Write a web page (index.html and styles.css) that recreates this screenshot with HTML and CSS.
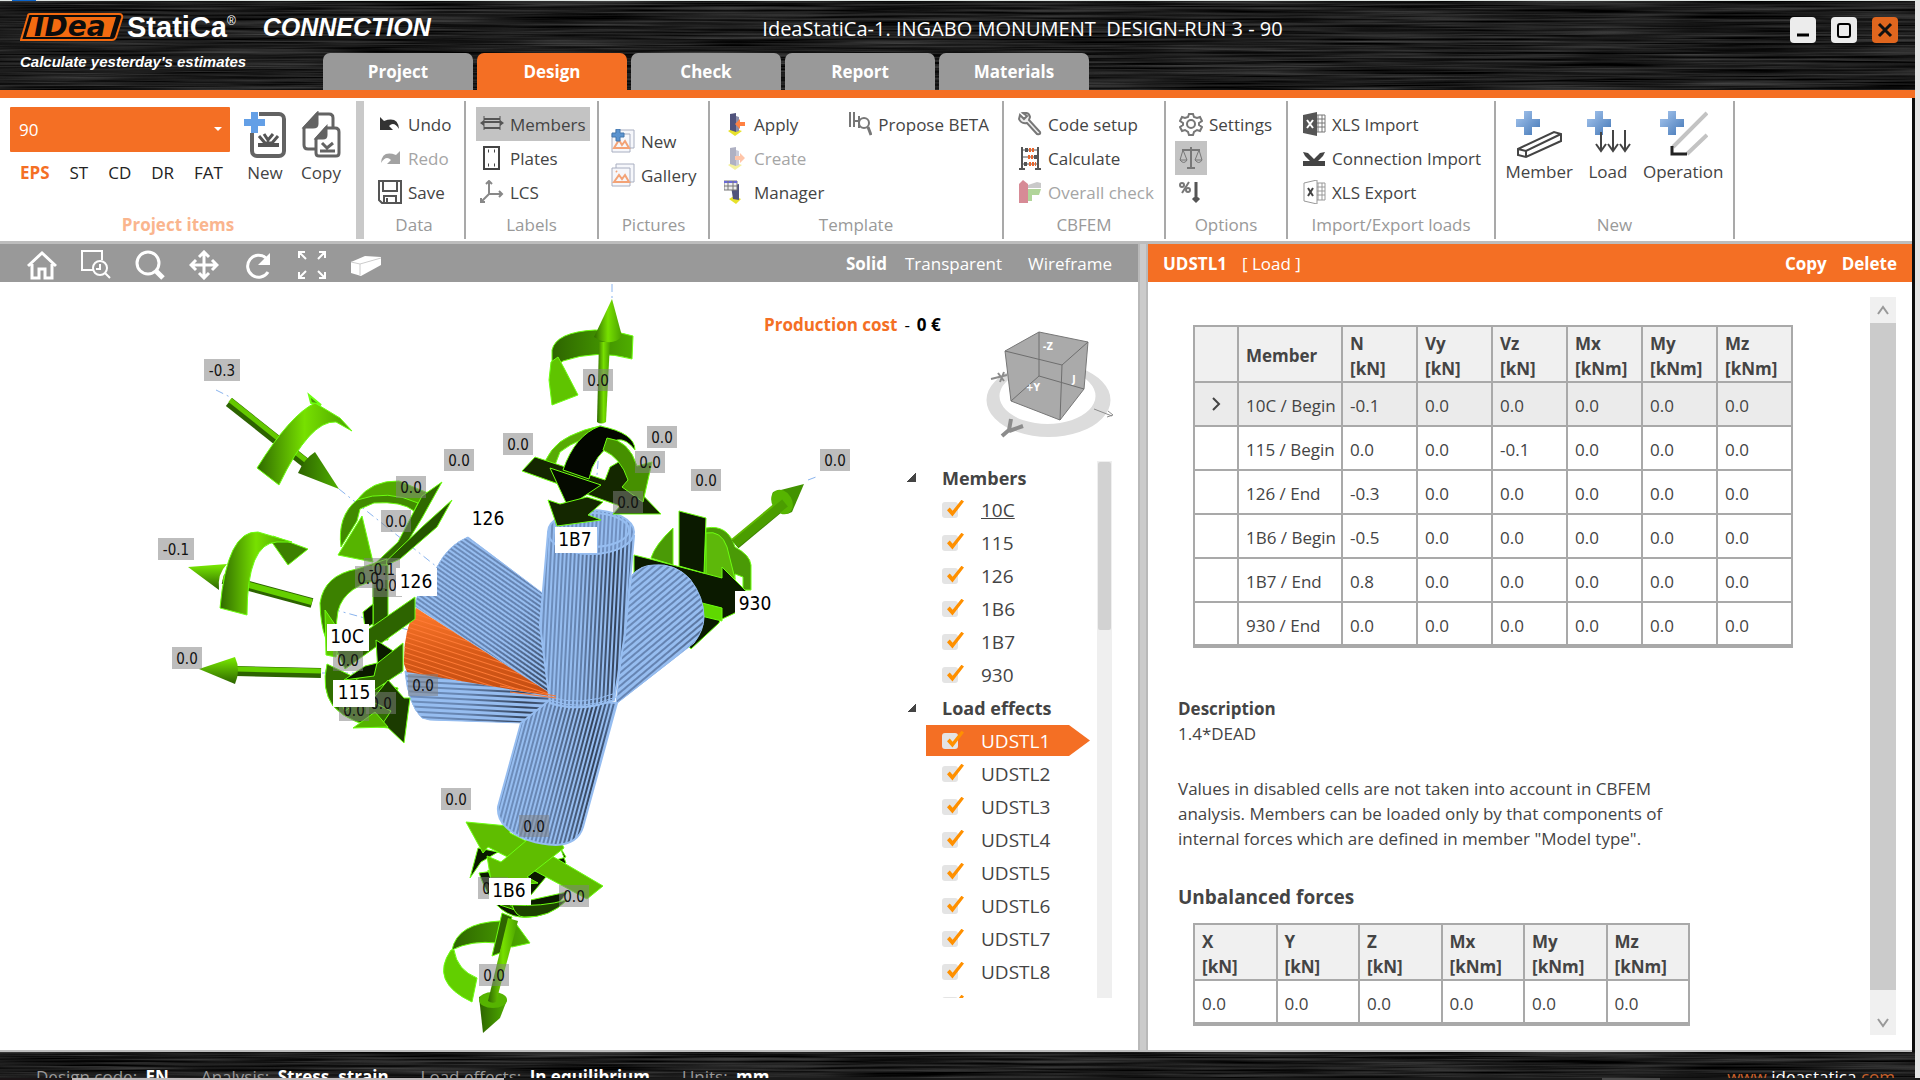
FILE: index.html
```html
<!DOCTYPE html>
<html lang="en">
<head>
<meta charset="UTF-8">
<meta name="viewport" content="width=device-width, initial-scale=1.0">
<title>IdeaStatiCa-1. INGABO MONUMENT DESIGN-RUN 3 - 90</title>
<link rel="stylesheet" href="styles.css">
</head>
<body>

<div class="window">
    <header class="titlebar">
        <svg class="metal" width="100%" height="100%" preserveAspectRatio="none">
            <filter id="brushed" x="0" y="0" width="100%" height="100%" color-interpolation-filters="sRGB">
                <feTurbulence type="fractalNoise" baseFrequency="0.006 0.45" numOctaves="3" seed="4"/>
                <feColorMatrix values="0.4 0 0 0 -0.09  0.4 0 0 0 -0.09  0.4 0 0 0 -0.09  0 0 0 0 1"/>
            </filter>
            <rect width="100%" height="100%" filter="url(#brushed)"/>
        </svg>
        <div class="brand">
            <div class="brand-row">
                <span class="idea">
                    <svg viewBox="0 0 104 28" width="104" height="28"><path d="M10 1h89q4 0 3 4l-6 19q-1 3-4 3H1L8 3q0-2 2-2z" fill="#0c0c0c" stroke="#f26a10" stroke-width="2"/><path d="M12 4h84l-6 20H6z" fill="#f26a10"/></svg>
                    <b>IDea</b>
                </span>
                <span class="statica">StatiCa<sup>®</sup></span>
                <span class="connection">CONNECTION</span>
            </div>
            <div class="slogan">Calculate yesterday's estimates</div>
        </div>
        <h1 class="title">IdeaStatiCa-1. INGABO MONUMENT&nbsp; DESIGN-RUN 3 - 90</h1>
        <div class="window-buttons">
            <button aria-label="Minimize"><svg width="26" height="26"><path d="M7 18h12" stroke="#000" stroke-width="3"/></svg></button>
            <button aria-label="Maximize"><svg width="26" height="26"><rect x="7" y="7" width="12" height="13" rx="2" fill="none" stroke="#000" stroke-width="2"/></svg></button>
            <button class="close" aria-label="Close"><svg width="26" height="26"><path d="M7 7l12 12M19 7L7 19" stroke="#111" stroke-width="3"/></svg></button>
        </div>
        <nav class="tabs">
            <button>Project</button>
            <button class="active">Design</button>
            <button>Check</button>
            <button>Report</button>
            <button>Materials</button>
        </nav>
    </header>

    <div class="ribbon">
        <section class="group g-project">
            <div class="tools">
                <div class="item-picker">
                    <div class="combo"><select aria-label="Project item"><option>90</option></select></div>
                    <div class="modes">
                        <button class="on">EPS</button><button>ST</button><button>CD</button><button>DR</button><button>FAT</button>
                    </div>
                </div>
                <button class="big">
                    <svg width="44" height="50"><rect x="9" y="3" width="32" height="42" rx="5" fill="#fff" stroke="#636363" stroke-width="4"/><path d="M0 7h7V0h9v7h7v8h-7v7H7v-7H0z" fill="#fff"/><path d="M1 8h7V1h7v7h7v7h-7v7H8v-7H1z" fill="#639fe6"/><path d="M15 34h21" stroke="#555" stroke-width="4"/><path d="M16 25l6 7h7l6-7M21 23l4 6 5-6" stroke="#555" stroke-width="3" fill="none"/></svg>
                    New
                </button>
                <button class="big">
                    <svg width="44" height="50" fill="#fff" stroke="#636363" stroke-width="3"><path d="M18 3h12q4 0 4 4v28q0 3-3 3H9q-4 0-4-4V17z"/><path d="M18 3v10q0 3-4 3H6z" fill="#636363"/><path d="M27 17h9q4 0 4 4v21q0 3-3 3H20q-3 0-3-3V28z"/><path d="M27 17v7q0 3-3 3h-6z" fill="#636363"/><path d="M21 40h15M23 32l5 5 6-5" fill="none"/></svg>
                    Copy
                </button>
            </div>
            <h2>Project items</h2>
        </section>

        <section class="group g-data">
            <div class="tools col">
                <button><svg width="24" height="24"><path d="M2 5v13h13l-4-4q5-5 10 3-1-13-15-8z" fill="#333"/></svg>Undo</button>
                <button disabled><svg width="24" height="24"><path d="M22 5v13H9l4-4Q8 9 3 17 4 4 18 9z" fill="#333"/></svg>Redo</button>
                <button><svg width="24" height="24" fill="none" stroke="#555" stroke-width="2"><path d="M1 1h22v22H4l-3-3zM5 1v10h14V1M6 23v-7h12v7M9 18v4"/></svg>Save</button>
            </div>
            <h2>Data</h2>
        </section>

        <section class="group g-labels">
            <div class="tools col">
                <button class="pressed"><svg width="24" height="24" fill="none" stroke="#555" stroke-width="2"><path d="M4 4v14M20 4v14" stroke-width="1"/><path d="M4 7h16M4 16h16M3 10h18" /><path d="M0 11l4-3v6zM24 11l-4-3v6z" fill="#555" stroke="none"/></svg>Members</button>
                <button><svg width="24" height="24" fill="none" stroke="#444" stroke-width="2"><rect x="4" y="1" width="15" height="22"/><path d="M8 5h1M14 5h1M8 19h1M14 19h1" stroke-width="3"/></svg>Plates</button>
                <button><svg width="24" height="24" fill="none" stroke="#888" stroke-width="2"><path d="M9 1v13h13M9 14l-8 8M6 4l3-3 3 3M19 11l3 3-3 3M1 18v4h4"/></svg>LCS</button>
            </div>
            <h2>Labels</h2>
        </section>

        <section class="group g-pictures">
            <div class="tools col">
                <button><svg width="24" height="24" fill="#f6f7fb" stroke="#a8aec0"><path d="M5 1h18v18H5z"/><path d="M1 5h18v18H1z"/><path d="M3 19l5-8 3 5 3-4 4 7z" fill="none" stroke="#f3a377" stroke-width="2"/><path d="M1 4h4V0h4v4h4v4H9v4H5V8H1z" fill="#5b93cf" stroke="#4576ac"/></svg>New</button>
                <button><svg width="24" height="24" fill="#f6f7fb" stroke="#a8aec0"><path d="M5 1h18v18H5z"/><path d="M1 5h18v18H1z"/><path d="M3 19l5-7 3 4 3-4 4 7zM5 8l1 1" fill="none" stroke="#f3a377" stroke-width="2"/></svg>Gallery</button>
            </div>
            <h2>Pictures</h2>
        </section>

        <section class="group g-template">
            <div class="tools">
                <div class="col">
                    <button><svg width="24" height="24"><path d="M4 19l5-3 9 3-7 5z" fill="#e7e12b"/><path d="M6 2l6-1v19l-6-2z" fill="#50537c"/><path d="M12 4l3 1v14l-3 1z" fill="#8b8ea9"/><path d="M11 12l5-5v3h5v4h-5v3z" fill="#ff8142"/></svg>Apply</button>
                    <button disabled><svg width="24" height="24"><path d="M4 19l5-3 9 3-7 5z" fill="#e7e12b"/><path d="M6 2l6-1v19l-6-2z" fill="#50537c"/><path d="M12 4l3 1v14l-3 1z" fill="#8b8ea9"/><path d="M21 12l-5-5v3h-5v4h5v3z" fill="#ff8142"/></svg>Create</button>
                    <button><svg width="24" height="24"><path d="M5 19l5-3 7 3-5 5z" fill="#e7e12b"/><path d="M7 6l8-2v16l-6-1z" fill="#50537c"/><path d="M0 1h13v9H0z" fill="#eee" stroke="#777"/><path d="M0 2h13" stroke="#6a6ad8" stroke-width="2"/><path d="M4 1v9M9 1v9M0 6h13" stroke="#777"/></svg>Manager</button>
                </div>
                <div class="col">
                    <button><svg width="24" height="24" fill="none" stroke="#777" stroke-width="2"><path d="M2 0v15M6 0v15M11 4v12M7 9h4"/><circle cx="16" cy="11" r="5"/><path d="M20 15l3 8" stroke-width="3"/></svg>Propose BETA</button>
                </div>
            </div>
            <h2>Template</h2>
        </section>

        <section class="group g-cbfem">
            <div class="tools col">
                <button><svg width="24" height="24"><path d="M2 3l4 4 3-3-4-3q6-1 7 4l-1 3 11 12q1 3-3 2L9 11q-6 1-8-4z" fill="#eee" stroke="#777" stroke-width="2"/></svg>Code setup</button>
                <button><svg width="24" height="24" fill="none" stroke="#555" stroke-width="2"><path d="M4 1v22M20 1v22M1 23h6M17 23h6"/><path d="M4 4h16M4 11h16M4 18h16" stroke-width="1"/><path d="M7 4h3M16 11h3M6 18h3" stroke-width="4"/><path d="M11 4h5M10 11h5M11 18h7" stroke="#e9652c" stroke-width="4" stroke-dasharray="2 1"/></svg>Calculate</button>
                <button disabled><svg width="24" height="24"><path d="M1 4l4-4 5 4v19H1z" fill="#a80018"/><path d="M10 5l9-3 4 1v5H10z" fill="#888"/><path d="M10 9h13l-2 6h-7v6h-4z" fill="#55a320"/></svg>Overall check</button>
            </div>
            <h2>CBFEM</h2>
        </section>

        <section class="group g-options">
            <div class="tools col">
                <button><svg width="24" height="24" fill="none" stroke="#777" stroke-width="2"><path d="M10 2h4l1 3 3 1 3-1 2 4-3 2v2l3 2-2 4-3-1-3 2-1 3h-4l-1-3-3-2-3 1-2-4 3-2v-2L1 9l2-4 3 1 3-1z"/><circle cx="12" cy="12" r="4"/></svg>Settings</button>
                <button class="pressed" aria-label="Equilibrium"><svg width="24" height="24" fill="none" stroke="#777" stroke-width="2"><path d="M12 1v21M8 22h8M3 4h18" /><path d="M4 4L1 14M4 4l4 10M20 4l-4 10M20 4l3 10M1 14h7q-3 5-7 0zM16 14h7q-3 5-7 0z" stroke-width="1"/></svg></button>
                <button aria-label="Percentage of load"><svg width="24" height="24" fill="none" stroke="#777" stroke-width="2"><circle cx="3" cy="5" r="2"/><circle cx="9" cy="10" r="2"/><path d="M10 2L3 13"/><path d="M17 2v19M14 18l3 3 3-3" stroke="#555" stroke-width="3"/></svg></button>
            </div>
            <h2>Options</h2>
        </section>

        <section class="group g-import">
            <div class="tools col">
                <button><svg width="24" height="24"><path d="M12 3h11v17H12z" fill="#fff" stroke="#777"/><path d="M16 3v17M20 3v17M12 7h11M12 11h11M12 15h11" stroke="#777"/><path d="M1 3l14-3v24L1 21z" fill="#555"/><path d="M5 8l6 8M11 8l-6 8" stroke="#fff" stroke-width="2"/></svg>XLS Import</button>
                <button><svg width="24" height="24"><path d="M1 15h22v5H1zM1 6l5 1 6 6 6-6 5-1-2 4-5 5H8l-5-5z" fill="#444"/></svg>Connection Import</button>
                <button><svg width="24" height="24"><path d="M12 3h11v17H12z" fill="#fff" stroke="#999"/><path d="M16 3v17M20 3v17M12 7h11M12 11h11M12 15h11" stroke="#999"/><path d="M2 3l13-3v24L2 21z" fill="#fff" stroke="#999"/><path d="M6 8l5 8M11 8l-5 8" stroke="#444" stroke-width="2"/></svg>XLS Export</button>
            </div>
            <h2>Import/Export loads</h2>
        </section>

        <section class="group g-new">
            <div class="tools">
                <button class="big">
                    <svg width="50" height="50"><defs><linearGradient id="plus" x2="1" y2="1"><stop offset="0" stop-color="#a9c8f0"/><stop offset="1" stop-color="#4377b6"/></linearGradient></defs><path d="M2 9h8V1h8v8h8v8h-8v8h-8v-8H2z" fill="url(#plus)"/><path d="M4 39l36-17 7 2v7L12 47l-8-2zM4 39l8 2 35-17M12 41v6" fill="#fff" stroke="#444" stroke-width="2"/></svg>
                    Member
                </button>
                <button class="big">
                    <svg width="50" height="50"><path d="M4 9h8V1h8v8h8v8h-8v8h-8v-8H4z" fill="url(#plus)"/><path d="M18 22v18M30 20v20M42 20v20M13 34l5 7 5-7M25 34l5 7 5-7M37 34l5 7 5-7" fill="none" stroke="#444" stroke-width="2"/></svg>
                    Load
                </button>
                <button class="big">
                    <svg width="50" height="50"><path d="M49 3L15 37M49 25L29 44" fill="none" stroke="#c3c3c3" stroke-width="4"/><path d="M2 9h8V1h8v8h8v8h-8v8h-8v-8H2z" fill="url(#plus)"/><path d="M14 36v8h15" fill="none" stroke="#222" stroke-width="3"/></svg>
                    Operation
                </button>
            </div>
            <h2>New</h2>
        </section>
    </div>

    <main class="workspace">
        <section class="pane">
            <div class="viewbar">
                <button aria-label="Home"><svg width="30" height="30" fill="none" stroke="#fff" stroke-width="3"><path d="M1 16L15 3l14 13M5 14v14h7v-9h6v9h7V14"/></svg></button>
                <button aria-label="Zoom window"><svg width="30" height="30" fill="none" stroke="#fff" stroke-width="2"><path d="M12 20H1V1h20v9"/><circle cx="19" cy="18" r="7"/><path d="M24 23l5 5M19 14v5h-4"/></svg></button>
                <button aria-label="Zoom"><svg width="30" height="30" fill="none" stroke="#fff" stroke-width="3"><circle cx="13" cy="13" r="11"/><path d="M21 21l7 7" stroke-width="5"/></svg></button>
                <button aria-label="Pan"><svg width="30" height="30" fill="none" stroke="#fff" stroke-width="3"><path d="M15 3v24M3 15h24M10 7l5-5 5 5M10 23l5 5 5-5M7 10l-5 5 5 5M23 10l5 5-5 5"/></svg></button>
                <button aria-label="Rotate"><svg width="30" height="30" fill="none" stroke="#fff" stroke-width="3"><path d="M25 22A11 11 0 1 1 23 8"/><path d="M27 3v12H15z" fill="#fff" stroke="none"/></svg></button>
                <button aria-label="Fit"><svg width="30" height="30" fill="none" stroke="#fff" stroke-width="2"><path d="M2 8V2h6M2 2l7 7M22 2h6v6M28 2l-7 7M2 22v6h6M2 28l7-7M22 28h6v-6M28 28l-7-7"/></svg></button>
                <button aria-label="Perspective"><svg width="30" height="30"><path d="M0 12L14 6l16 1v8L10 26 0 23z" fill="#fff"/><path d="M0 12l9 2 21-6M9 14v11" stroke="#ccc" fill="none"/></svg></button>
                <div class="render-modes">
                    <button class="on">Solid</button><button>Transparent</button><button>Wireframe</button>
                </div>
            </div>
            <div class="viewport">
                <svg class="scene" viewBox="0 282 1138 768" preserveAspectRatio="xMinYMin meet">
                    <defs>
                        <pattern id="sv" width="4" height="9" patternUnits="userSpaceOnUse" patternTransform="rotate(3)"><rect width="2" height="9" fill="#96bdf0"/></pattern>
                        <pattern id="sl" width="4" height="9" patternUnits="userSpaceOnUse" patternTransform="rotate(15)"><rect width="2" height="9" fill="#96bdf0"/></pattern>
                        <pattern id="s126" width="9" height="4" patternUnits="userSpaceOnUse" patternTransform="rotate(35)"><rect width="9" height="2" fill="#96bdf0"/></pattern>
                        <pattern id="s115" width="9" height="5" patternUnits="userSpaceOnUse" patternTransform="rotate(3)"><rect width="9" height="3" fill="#96bdf0"/></pattern>
                        <pattern id="s930" width="9" height="5" patternUnits="userSpaceOnUse" patternTransform="rotate(-40)"><rect width="9" height="3" fill="#96bdf0"/></pattern>
                        <pattern id="s10c" width="9" height="5" patternUnits="userSpaceOnUse" patternTransform="rotate(18)"><rect width="9" height="1" fill="#ff7a35"/></pattern>
                        <linearGradient id="tube"><stop offset="0" stop-color="#6f90bf"/><stop offset=".4" stop-color="#6684b0"/><stop offset=".8" stop-color="#33425a"/><stop offset="1" stop-color="#5573a0"/></linearGradient>
                        <linearGradient id="tube2" x2="1" y2="1"><stop offset="0" stop-color="#6f90bf"/><stop offset=".6" stop-color="#6482b0"/><stop offset="1" stop-color="#33425a"/></linearGradient>
                        <linearGradient id="org" x2="0" y2="1"><stop offset="0" stop-color="#ff7a2c"/><stop offset=".5" stop-color="#d85a18"/><stop offset="1" stop-color="#c24d12"/></linearGradient>
                        <linearGradient id="gr"><stop offset="0" stop-color="#2f6a00"/><stop offset=".5" stop-color="#77e000"/><stop offset="1" stop-color="#4aa000"/></linearGradient>
                        <linearGradient id="grv" x2="0" y2="1"><stop offset="0" stop-color="#7aec00"/><stop offset="1" stop-color="#2c6300"/></linearGradient>
                        <linearGradient id="gd"><stop offset="0" stop-color="#2d6400"/><stop offset="1" stop-color="#4fae00"/></linearGradient>
                    </defs>

                    <!-- member axes -->
                    <path d="M612 284v14M601 425l-4 50M216 390l14 7M339 489l98 78M332 609l80 22M322 673h84M808 480l8-3" fill="none" stroke="#8ab4ee" stroke-dasharray="8 4 2 4"/>

                    <!-- forces on 930 -->
                    <g stroke="#6dff10" stroke-width="1">
                        <path d="M651 558Q655 545 673 528v37zM706 528Q728 524 735 547 750 555 751 565V590h-8V577l-8-3v16l-31-16z" fill="#4a9a06"/>
                        <path d="M706 533q15-3 21 14l8 32h-29z" fill="#5db80a"/>
                        <path d="M634 555l16 4 72 19v-11l25 25-12 21-15 7-1 3-28 26-57-70z" fill="#0b1a00"/>
                        <path d="M690 600l32 8v13l-25-6z" fill="#5fd800"/>
                        <path d="M679 511l27 7-2 55-25-7z" fill="#0b1a00"/>
                    </g>
                    <path d="M735 544l48-40" stroke="#3c8200" stroke-width="11"/>
                    <path d="M733 541l48-40" stroke="#61bb00" stroke-width="5"/>
                    <path d="M773 492l31-8-12 28q-10 6-17-5-5-9-2-15z" fill="#429300"/>
                    <ellipse cx="782" cy="502" rx="10" ry="13" transform="rotate(-30 782 502)" fill="#56b400"/>
                    <path d="M735 544l50-41" stroke="#4b9d00" stroke-width="9"/>

                    <!-- members -->
                    <path d="M632 575Q641 565 654 565 675 563 690 579 704 597 704 617 704 630 694 643L616 704l8-70z" fill="url(#tube2)"/>
                    <path d="M632 575Q641 565 654 565 675 563 690 579 704 597 704 617 704 630 694 643L616 704l8-70z" fill="url(#s930)" stroke="#96bdf0"/>
                    <path d="M405 671Q408 705 422 718l8 2 93 3 27-16 6-10z" fill="url(#tube)"/>
                    <path d="M405 671Q408 705 422 718l8 2 93 3 27-16 6-10z" fill="url(#s115)" stroke="#96bdf0"/>
                    <path d="M468 537Q448 545 437 567 418 590 414 606L556 697 545 595z" fill="url(#tube2)"/>
                    <path d="M468 537Q448 545 437 567 418 590 414 606L556 697 545 595z" fill="url(#s126)" stroke="#96bdf0"/>
                    <path d="M416 608Q403 632 404 664l3 8 149 25z" fill="url(#org)"/>
                    <path d="M416 608Q403 632 404 664l3 8 149 25z" fill="url(#s10c)"/>

                    <!-- forces on 1B6, behind the tube -->
                    <g stroke="#6dff10">
                        <path d="M478 848l20 4-17 10-11 16zM479 873l60-8 27-8-6-10 6 16-20 14-20 24 41-9Q550 920 520 917q-27-3-41-44z" fill="#0b1a00"/>
                        <path d="M488 870l12 35 18 6-18-14z" fill="#2e6500"/>
                        <path d="M512 905q30 2 55-5-17 18-43 17-8 0-12-12z" fill="#1d4200"/>
                        <path d="M466 822l42 4 2 7 20 10 73 43-16 13-50-27-49-25-5 6z" fill="#5fbd00"/>
                        <path d="M527 840h33l4 8-37 29 11 6-46 4-5-31 14 6z" fill="#5fbd00"/>
                    </g>
                    <path d="M521 723L498 807q-1 12 8 20 18 17 50 18 22-1 27-18l34-124-66-4z" fill="url(#tube)"/>
                    <path d="M521 723L498 807q-1 12 8 20 18 17 50 18 22-1 27-18l34-124-66-4z" fill="url(#sl)" stroke="#96bdf0" stroke-width="2"/>

                    <path d="M548 533L540 625l10 78q30 10 64-3L625 634l9-98z" fill="url(#tube)"/>
                    <path d="M548 533L540 625l10 78q30 10 64-3L625 634l9-98z" fill="url(#sv)" stroke="#96bdf0" stroke-width="2"/>
                    <ellipse cx="591" cy="532" rx="43" ry="22" fill="#7090c0"/>
                    <ellipse cx="591" cy="532" rx="43" ry="22" fill="url(#sv)" stroke="#96bdf0" stroke-width="2"/>
                    <ellipse cx="592" cy="530" rx="37" ry="17" fill="none" stroke="#96bdf0" stroke-width="2"/>
                    <path d="M550 700q30 12 66-3M550 697q30 10 66-4" fill="none" stroke="#96bdf0"/>
                    <path d="M500 686l56 10M510 692l46 6" stroke="#ff7a35"/>

                    <!-- forces on 1B7 -->
                    <g stroke="#6dff10">
                        <path d="M541 473Q548 446 570 436q14-7 30-10l10 8q-30 2-50 18l-5 13z" fill="#57aa05"/>
                        <path d="M522 471l13-14 70 23 5-13 12-7 13 27 26 27h-48l7-8z" fill="#142700"/>
                        <path d="M563 470Q575 435 600 426q35 7 35 24-9-12-18-10-24 15-28 39z" fill="#030600"/>
                        <path d="M607 438q22 2 30 28l15-4-9 40-21-15 6-7q-7-22-25-30z" fill="#469000"/>
                        <path d="M550 468l51 17-33 22z" fill="#050a00"/>
                        <path d="M548 500l12 4 27-7 16 5-15 13 13 5-44 6z" fill="#142700"/>
                    </g>
                    <path d="M552 350Q556 332 595 330q20 0 38 6l-1 23q-35-10-69 2l-11 8z" fill="url(#gd)" stroke="#6dff10"/>
                    <path d="M551 362l7-5 6 11 14 27-26 10-3-25z" fill="#5fc400" stroke="#6dff10"/>
                    <path d="M599 342h11l-4 80q-5 3-9 0z" fill="url(#gr)"/>
                    <path d="M612 299l10 37q-10 12-28 1z" fill="url(#gr)"/>

                    <!-- force and moment on 126 -->
                    <path d="M229 402l83 66" stroke="#2c6300" stroke-width="10"/>
                    <path d="M230 400l83 66" stroke="#64c800" stroke-width="5"/>
                    <path d="M315 452l24 37-41-16q6-14 17-21z" fill="url(#gd)"/>
                    <path d="M309 395l12 10-10-2z" fill="#4a9a06" stroke="#6dff10" stroke-width="2"/>
                    <path d="M257 468Q290 415 315 403l25 15 12 13-16-9q-26-2-57 63z" fill="url(#gr)" stroke="#6dff10"/>

                    <!-- force and moment on 10C -->
                    <path d="M223 579l89 24" stroke="#2c6300" stroke-width="10"/>
                    <path d="M223 578l89 24" stroke="#65d000" stroke-width="6"/>
                    <path d="M188 567l39-3q-10 10-8 26z" fill="url(#grv)"/>
                    <path d="M273 536l35 13-20 16-17-24z" fill="#3d8000" stroke="#6dff10"/>
                    <path d="M220 608Q227 530 258 532l34 10-15 0q-30 1-30 73z" fill="url(#gr)" stroke="#6dff10"/>

                    <!-- force on 115 -->
                    <path d="M236 671l85 2" stroke="#2c6300" stroke-width="10"/>
                    <path d="M236 669l85 2" stroke="#65d000" stroke-width="5"/>
                    <path d="M199 669l36-12q6 13 0 27z" fill="url(#grv)"/>

                    <!-- crowded end of 126, 10C and 115 -->
                    <g stroke="#6dff10">
                        <path d="M357 500q15-20 42-19l29 12-14 17q-20-16-57-9z" fill="#52aa00"/>
                        <path d="M357 500q-20 16-16 47l16-26 3-12 14-6q28-2 40 8l4-8q-30-14-61-3z" fill="#418a00"/>
                        <path d="M442 482l-20 14-24 46-32 30 19-8 20-18 17-28z" fill="#2f6900"/>
                        <path d="M452 500l-30 27-44 42 22-10 37-32z" fill="#255500"/>
                        <path d="M362 516l11 46-35-7z" fill="#56b400"/>
                        <path d="M320 603q4-28 37-34l30-10-2 20q-40 5-47 32-4 20 2 45-19-10-20-53z" fill="#3c8100"/>
                        <path d="M325 610l15 22-4 25-10-2z" fill="#5cc400"/>
                        <path d="M373 565h15v75h-15z" fill="#245400"/>
                        <path d="M363 612l10-8v20l-8 4z" fill="#0b1a00"/>
                        <path d="M415 597v22l-70 50-8-18z" fill="#2d6400"/>
                        <path d="M327 664q-6 25 6 42 18 20 55 22l10-40-38-8z" fill="#316e00"/>
                        <path d="M376 640l22 14-20 20z" fill="#0b1a00"/>
                        <path d="M403 643v28l-30 20-28 20-8-16z" fill="#2d6400"/>
                        <path d="M365 666l12-3-3 13-30 4z" fill="#0b1a00"/>
                        <path d="M388 680l16 18 6 0-6 45-21-20 8-12-20-10z" fill="#1b3b00"/>
                        <path d="M353 728l22-16 13 15z" fill="#56b400"/>
                    </g>

                    <!-- force and moment below 1B6 -->
                    <path d="M452 950q5-27 48-29h14l16 22-18 4-14-4q-27-3-46 7z" fill="url(#gd)" stroke="#6dff10"/>
                    <path d="M451 950q-22 32 21 52l5-24q-20-8-23-28z" fill="#62cf00" stroke="#6dff10"/>
                    <path d="M502 913l10 4-12 36-8 3z" fill="#2e6500" stroke="#6dff10"/>
                    <path d="M479 997q14-8 28 3l-7 18-17 15z" fill="url(#gd)"/>
                    <ellipse cx="493" cy="1000" rx="14" ry="8" fill="#56b400"/>
                    <path d="M508 918l10 3-22 81q-4 2-8-1z" fill="url(#gr)"/>

                    <g class="value">
                        <g fill="#808080" fill-opacity=".52">
                            <rect x="204" y="359" width="36" height="22"/><rect x="444" y="449" width="30" height="22"/><rect x="396" y="476" width="30" height="22"/><rect x="381" y="510" width="30" height="22"/><rect x="364" y="558" width="36" height="22"/><rect x="355" y="566" width="30" height="22"/><rect x="372" y="575" width="30" height="22"/><rect x="158" y="538" width="36" height="22"/><rect x="172" y="647" width="30" height="22"/><rect x="333" y="649" width="30" height="22"/><rect x="408" y="674" width="30" height="22"/><rect x="366" y="692" width="30" height="22"/><rect x="339" y="699" width="30" height="22"/><rect x="583" y="369" width="30" height="22"/><rect x="503" y="433" width="30" height="22"/><rect x="647" y="426" width="30" height="22"/><rect x="635" y="451" width="30" height="22"/><rect x="613" y="491" width="30" height="22"/><rect x="691" y="469" width="30" height="22"/><rect x="820" y="449" width="30" height="22"/><rect x="441" y="788" width="30" height="22"/><rect x="519" y="815" width="30" height="22"/><rect x="478" y="877" width="30" height="22"/><rect x="559" y="885" width="30" height="22"/><rect x="479" y="964" width="30" height="22"/>
                        </g>
                        <text x="222" y="376">-0.3</text><text x="459" y="466">0.0</text><text x="411" y="493">0.0</text><text x="396" y="527">0.0</text><text x="382" y="575">-0.1</text><text x="368" y="584">0.0</text><text x="386" y="591">0.0</text><text x="176" y="555">-0.1</text><text x="187" y="664">0.0</text><text x="348" y="666">0.0</text><text x="423" y="691">0.0</text><text x="381" y="709">0.0</text><text x="354" y="716">0.0</text><text x="598" y="386">0.0</text><text x="518" y="450">0.0</text><text x="662" y="443">0.0</text><text x="650" y="468">0.0</text><text x="628" y="508">0.0</text><text x="706" y="486">0.0</text><text x="835" y="466">0.0</text><text x="456" y="805">0.0</text><text x="534" y="832">0.0</text><text x="493" y="894">0.0</text><text x="574" y="902">0.0</text><text x="494" y="981">0.0</text>
                    </g>
                    <g class="member-name">
                        <g fill="#fff"><rect x="555" y="527" width="42" height="26"/><rect x="396" y="568" width="41" height="28"/><rect x="735" y="591" width="38" height="26"/><rect x="327" y="624" width="42" height="27"/><rect x="333" y="680" width="42" height="27"/><rect x="489" y="878" width="42" height="27"/></g>
                        <text x="575" y="546">1B7</text><text x="488" y="525">126</text><text x="416" y="588">126</text><text x="755" y="610">930</text><text x="347" y="643">10C</text><text x="354" y="699">115</text><text x="509" y="897">1B6</text>
                    </g>

                    <!-- view cube -->
                    <path d="M1048 363a62 37 0 1 0 1 0zM1048 368a48 28 0 1 1-1 0z" fill="#dcdcdc" fill-rule="evenodd"/>
                    <path d="M1005 351l34-19 49 10-4 47-24 31-49-19z" fill="#aaa" stroke="#777"/>
                    <path d="M1005 351l57 14 26-23M1062 365l-2 55M1039 332v44l-28 25M1039 376l45 13" fill="none" stroke="#6e6e6e"/>
                    <g fill="none" stroke="#8c8c8c" stroke-width="2"><path d="M991 379l16-4M998 373l6 8M1004 372l-4 10"/><path d="M1011 419l-2 11-7 6M1023 426l-14 5" stroke-width="4"/><path d="M1094 409l18 7M1108 411l5 4-6 2" stroke-width="1"/></g>
                    <g class="cube-face"><text x="1033" y="391">+Y</text><text x="1048" y="350">-Z</text><text x="1074" y="383">J</text></g>
                </svg>

                <aside class="sidebar">
                    <p class="cost"><b class="cost-name">Production cost</b><span>-</span><b>0 €</b></p>
                    <div class="tree">
                        <div class="tree-list">
                            <h3>Members</h3>
                            <label class="current"><input type="checkbox" checked><span>10C</span></label>
                            <label><input type="checkbox" checked><span>115</span></label>
                            <label><input type="checkbox" checked><span>126</span></label>
                            <label><input type="checkbox" checked><span>1B6</span></label>
                            <label><input type="checkbox" checked><span>1B7</span></label>
                            <label><input type="checkbox" checked><span>930</span></label>
                            <h3>Load effects</h3>
                            <label class="selected"><input type="checkbox" checked><span>UDSTL1</span></label>
                            <label><input type="checkbox" checked><span>UDSTL2</span></label>
                            <label><input type="checkbox" checked><span>UDSTL3</span></label>
                            <label><input type="checkbox" checked><span>UDSTL4</span></label>
                            <label><input type="checkbox" checked><span>UDSTL5</span></label>
                            <label><input type="checkbox" checked><span>UDSTL6</span></label>
                            <label><input type="checkbox" checked><span>UDSTL7</span></label>
                            <label><input type="checkbox" checked><span>UDSTL8</span></label>
                            <label><input type="checkbox" checked aria-label="Next load"></label>
                        </div>
                        <div class="tree-scroll"><div class="thumb"></div></div>
                    </div>
                </aside>
            </div>
        </section>

        <div class="splitter"></div>

        <section class="pane">
            <div class="loadbar">
                <b>UDSTL1</b><span>[ Load ]</span>
                <button class="first">Copy</button><button>Delete</button>
            </div>
            <div class="details">
                <div class="details-body">
                    <table class="forces">
                        <thead>
                            <tr><th class="mark"></th><th class="name">Member</th><th>N<br>[kN]</th><th>Vy<br>[kN]</th><th>Vz<br>[kN]</th><th>Mx<br>[kNm]</th><th>My<br>[kNm]</th><th>Mz<br>[kNm]</th></tr>
                        </thead>
                        <tbody>
                            <tr class="active"><td class="mark"><svg width="10" height="14"><path d="M2 1l6 6-6 6" fill="none" stroke="#444" stroke-width="2"/></svg></td><td>10C / Begin</td><td>-0.1</td><td>0.0</td><td>0.0</td><td>0.0</td><td>0.0</td><td>0.0</td></tr>
                            <tr><td></td><td>115 / Begin</td><td>0.0</td><td>0.0</td><td>-0.1</td><td>0.0</td><td>0.0</td><td>0.0</td></tr>
                            <tr><td></td><td>126 / End</td><td>-0.3</td><td>0.0</td><td>0.0</td><td>0.0</td><td>0.0</td><td>0.0</td></tr>
                            <tr><td></td><td>1B6 / Begin</td><td>-0.5</td><td>0.0</td><td>0.0</td><td>0.0</td><td>0.0</td><td>0.0</td></tr>
                            <tr><td></td><td>1B7 / End</td><td>0.8</td><td>0.0</td><td>0.0</td><td>0.0</td><td>0.0</td><td>0.0</td></tr>
                            <tr><td></td><td>930 / End</td><td>0.0</td><td>0.0</td><td>0.0</td><td>0.0</td><td>0.0</td><td>0.0</td></tr>
                        </tbody>
                    </table>

                    <h4>Description</h4>
                    <p>1.4*DEAD</p>
                    <p class="note">Values in disabled cells are not taken into account in CBFEM<br>analysis. Members can be loaded only by that components of<br>internal forces which are defined in member "Model type".</p>

                    <h3>Unbalanced forces</h3>
                    <table class="forces unbalanced">
                        <thead>
                            <tr><th>X<br>[kN]</th><th>Y<br>[kN]</th><th>Z<br>[kN]</th><th>Mx<br>[kNm]</th><th>My<br>[kNm]</th><th>Mz<br>[kNm]</th></tr>
                        </thead>
                        <tbody>
                            <tr><td>0.0</td><td>0.0</td><td>0.0</td><td>0.0</td><td>0.0</td><td>0.0</td></tr>
                        </tbody>
                    </table>
                </div>
                <div class="scrollbar">
                    <button aria-label="Scroll up"><svg width="26" height="26"><path d="M8 17l5-7 5 7" fill="none" stroke="#999" stroke-width="2"/></svg></button>
                    <div class="thumb"></div>
                    <button aria-label="Scroll down"><svg width="26" height="26"><path d="M8 10l5 7 5-7" fill="none" stroke="#999" stroke-width="2"/></svg></button>
                </div>
            </div>
        </section>
    </main>

    <footer class="statusbar">
        <svg class="metal" width="100%" height="100%"><rect width="100%" height="100%" filter="url(#brushed)"/></svg>
        <span>Design code: <b>EN</b></span>
        <span>Analysis: <b>Stress, strain</b></span>
        <span>Load effects: <b>In equilibrium</b></span>
        <span>Units: <b>mm</b></span>
        <a href="#"><i>www.</i>ideastatica<i>.com</i></a>
    </footer>
</div>
<div class="taskbar"></div>

</body>
</html>
```

FILE: styles.css
```css
* {
    box-sizing: border-box;
}
body {
    margin: 0;
    height: 100vh;
    overflow: hidden;
    display: flex;
    flex-direction: column;
    padding-top: 1px;
    background: linear-gradient(90deg, #dfe5e2 12px, #0a63c9 12px, #0a63c9 36px, #dfe5e2 36px) top / 100% 1px no-repeat, #e4e4e4;
    font-family: "Open Sans", "Noto Sans", sans-serif;
    font-size: 17px;
    color: #444444;
}
h1, h2, h3, h4, p {
    margin: 0;
}
button, select {
    font: inherit;
    color: inherit;
    background: none;
    border: 0;
    padding: 0;
}
svg {
    display: block;
    flex: none;
}
.window {
    flex: 1;
    min-height: 0;
    display: flex;
    flex-direction: column;
    margin-right: 5px;
    background: #0c0c0c;
}

/* title bar */
.titlebar {
    position: relative;
    flex: none;
    height: 97px;
    display: flex;
    align-items: flex-start;
    border-bottom: 8px solid #f46f24;
    background: #151515;
    color: #ffffff;
}
.metal {
    position: absolute;
    top: 0;
    left: 0;
}
.brand {
    position: relative;
    padding: 10px 0 0 20px;
}
.brand-row {
    display: flex;
    align-items: center;
    height: 32px;
}
.idea {
    position: relative;
}
.idea b {
    position: absolute;
    top: 0;
    left: 14px;
    font: italic bold 28px/28px "DejaVu Sans", sans-serif;
    color: #0c0c0c;
}
.statica {
    margin-left: 3px;
    font: bold 29px/32px "Liberation Sans", sans-serif;
}
.statica sup {
    font-size: 12px;
    font-weight: normal;
    vertical-align: 12px;
    line-height: 1px;
}
.connection {
    margin-left: 27px;
    font: italic bold 25px/32px "Liberation Sans", sans-serif;
}
.slogan {
    font: italic bold 15px/22px "Liberation Sans", sans-serif;
    padding-top: 8px;
}
.title {
    position: absolute;
    top: 14px;
    left: 0;
    right: 0;
    padding-left: 130px;
    text-align: center;
    font-size: 20px;
    line-height: 28px;
    font-weight: 400;
}
.window-buttons {
    position: relative;
    display: flex;
    gap: 15px;
    margin-left: auto;
    padding: 16px 17px 0 0;
}
.window-buttons button {
    width: 26px;
    height: 26px;
    border-radius: 4px;
    background: #ececec;
}
.window-buttons .close {
    background: #e0661e;
}
.tabs {
    position: absolute;
    left: 323px;
    bottom: 0;
    display: flex;
    gap: 4px;
}
.tabs button {
    width: 150px;
    height: 37px;
    border-radius: 7px 7px 0 0;
    background: #999999;
    font-weight: 700;
}
.tabs .active {
    background: #f46f24;
}

/* ribbon */
.ribbon {
    flex: none;
    display: flex;
    height: 143px;
    margin-right: 3px;
    padding: 3px 0 2px;
    background: #ffffff;
}
.group {
    display: flex;
    flex-direction: column;
    border-right: 2px solid #a9a9a9;
}
.group h2 {
    font-size: 17px;
    line-height: 28px;
    font-weight: 400;
    text-align: center;
    color: #999999;
}
.tools {
    flex: 1;
    display: flex;
    padding: 6px 0 0 10px;
}
.col {
    display: flex;
    flex-direction: column;
    align-items: flex-start;
}
.col > button {
    display: flex;
    align-items: center;
    gap: 6px;
    height: 34px;
    padding: 0 4px;
    white-space: nowrap;
}
.col > .pressed {
    background: #c3c3c3;
}
.col > button:disabled {
    color: #a5a5a5;
}
.col > button:disabled svg {
    opacity: 0.45;
}
.big {
    display: flex;
    flex-direction: column;
    align-items: center;
    line-height: 24px;
}
.g-project {
    width: 364px;
    border-right: 8px solid #c9c9c9;
}
.g-project h2 {
    font-weight: 700;
    color: #fab58e;
}
.g-project .big {
    width: 56px;
    padding-top: 4px;
}
.item-picker {
    width: 220px;
    margin-right: 7px;
}
.combo {
    position: relative;
}
.combo select {
    width: 100%;
    height: 45px;
    padding: 0 9px;
    appearance: none;
    border-radius: 1px;
    background: #f46f24;
    color: #ffffff;
}
.combo::after {
    content: "";
    position: absolute;
    right: 8px;
    top: 20px;
    border: 4px solid transparent;
    border-top-color: #ffffff;
}
.modes {
    display: flex;
    justify-content: space-between;
    padding: 7px 7px 0 10px;
    line-height: 28px;
    color: #222222;
}
.modes .on {
    color: #f46f24;
    font-weight: 700;
}
.g-data { width: 102px; }
.g-labels { width: 133px; }
.g-pictures { width: 111px; }
.g-pictures .tools { padding-top: 23px; padding-left: 8px; }
.g-template { width: 294px; }
.g-template .tools { gap: 16px; }
.g-cbfem { width: 162px; }
.g-options { width: 122px; }
.g-options .tools { padding-left: 9px; }
.g-import { width: 208px; }
.g-new { width: 239px; }
.g-new .tools { gap: 10px; padding: 9px 12px 0; justify-content: center; }

/* workspace */
.workspace {
    flex: 1;
    min-height: 0;
    display: grid;
    grid-template-columns: 1138fr 10px 764fr;
    margin-right: 3px;
    border-top: 3px solid #bdbdbd;
    border-bottom: 2px solid #bdbdbd;
    background: #ffffff;
}
.pane {
    display: flex;
    flex-direction: column;
    min-width: 0;
    min-height: 0;
}
.splitter {
    background: #cbcbcb;
    border: solid #b9b9b9;
    border-width: 0 2px;
}
.viewbar, .loadbar {
    flex: none;
    height: 38px;
    display: flex;
    align-items: center;
    color: #ffffff;
}
.viewbar {
    gap: 24px;
    padding: 0 26px 0 27px;
    background: #999999;
}
.viewbar > button {
    padding-top: 4px;
}
.render-modes {
    display: flex;
    gap: 18px;
    margin-left: auto;
}
.render-modes button:last-child {
    padding-left: 8px;
}
.render-modes .on {
    font-weight: 700;
}
.loadbar {
    padding: 0 15px;
    gap: 15px;
    background: #f46f24;
}
.loadbar button {
    font-weight: 700;
}
.loadbar .first {
    margin-left: auto;
}
.viewport {
    position: relative;
    flex: 1;
    min-height: 0;
    display: flex;
    justify-content: flex-end;
}
.scene {
    position: absolute;
    top: 0;
    left: 0;
    width: 100%;
    height: 100%;
}
.scene text {
    text-anchor: middle;
    font-family: "DejaVu Sans Condensed", "DejaVu Sans", sans-serif;
}
.value text {
    font-size: 15px;
    fill: #111111;
}
.member-name text {
    font-size: 19px;
    fill: #000000;
}
.scene .cube-face text {
    font-size: 10px;
    font-weight: bold;
    fill: #ffffff;
}
.sidebar {
    position: relative;
    width: 374px;
    padding: 30px 26px 0 0;
}
.cost {
    display: flex;
    gap: 7px;
    line-height: 26px;
    color: #000000;
}
.cost-name {
    color: #f46f24;
}
.tree {
    display: flex;
    height: 537px;
    margin: 123px 0 0 142px;
    overflow: hidden;
}
.tree-list {
    flex: 1;
}
.tree h3, .tree label {
    display: flex;
    align-items: center;
    height: 31px;
    margin-bottom: 2px;
    font-size: 18px;
}
.tree h3 {
    margin-top: 2px;
}
.tree h3:first-child {
    margin-top: 0;
    padding-top: 2px;
}
.tree h3::before {
    content: "";
    width: 9px;
    height: 9px;
    margin: 0 26px 0 1px;
    background: linear-gradient(135deg, transparent 50%, #444444 50%);
}
.tree label {
    width: 164px;
    margin-left: 20px;
    padding-left: 16px;
    font-size: 19px;
    font-weight: 500;
}
.tree .current span {
    text-decoration: underline;
}
.tree .selected {
    background: #f46f24;
    color: #ffffff;
    clip-path: polygon(0 0, 143px 0, 100% 50%, 143px 100%, 0 100%);
}
.tree input {
    position: relative;
    appearance: none;
    width: 16px;
    height: 16px;
    margin: 0 23px 0 0;
    border-radius: 3px;
    background: #e4e4e4;
}
.tree input::before {
    content: "";
    position: absolute;
    left: 5px;
    top: -2px;
    width: 17px;
    height: 17px;
    background: #ff9000;
    clip-path: polygon(0 63%, 16% 47%, 33% 66%, 85% 2%, 100% 12%, 32% 100%);
}
.tree-scroll {
    width: 15px;
    padding: 1px;
    background: #efefef;
}
.tree-scroll .thumb {
    height: 168px;
    border-radius: 2px;
    background: #d2d2d2;
}

/* load details */
.details {
    flex: 1;
    min-height: 0;
    display: flex;
    padding: 15px 16px 15px 30px;
}
.details-body {
    flex: 1;
}
.forces {
    border-collapse: collapse;
    table-layout: fixed;
    width: 600px;
    margin: 28px 0 0 15px;
    border: 2px solid #a9a9a9;
    border-bottom-width: 4px;
}
.forces th, .forces td {
    border: 2px solid #a9a9a9;
    padding: 3px 0 0 7px;
    height: 44px;
    text-align: left;
    line-height: 25px;
    white-space: nowrap;
}
.forces th {
    height: 56px;
    background: #f0f0f0;
}
.forces .active {
    background: #ebebeb;
}
.forces .mark {
    width: 44px;
    padding: 0 0 0 16px;
}
.forces .name {
    width: 104px;
}
.details h4 {
    margin-top: 48px;
    font-size: 17px;
    line-height: 25px;
}
.details p {
    line-height: 25px;
}
.details .note {
    margin-top: 30px;
}
.details h3 {
    margin-top: 32px;
    font-size: 19px;
    line-height: 28px;
}
.forces.unbalanced {
    width: 497px;
    margin-top: 12px;
}
.scrollbar {
    width: 26px;
    display: flex;
    flex-direction: column;
    background: #f0f0f0;
}
.scrollbar .thumb {
    flex: 1;
    margin-bottom: 19px;
    background: #cbcbcb;
}

/* status bar */
.statusbar {
    position: relative;
    flex: none;
    height: 26px;
    display: flex;
    gap: 32px;
    padding: 14px 20px 0 36px;
    overflow: hidden;
    line-height: 22px;
    color: #999999;
    white-space: nowrap;
}
.statusbar span, .statusbar a {
    position: relative;
}
.statusbar b {
    margin-left: 4px;
    color: #ffffff;
}
.statusbar a {
    margin-left: auto;
    color: #ffffff;
    text-decoration: none;
}
.statusbar i {
    font-style: normal;
    color: #c8602a;
}
.taskbar {
    flex: none;
    height: 2px;
    background: linear-gradient(90deg, #1a1416 72px, #bdb8b9 72px, #bdb8b9 504px, #1a1a1a 504px, #1a1a1a 1602px, #4a4a4a 1602px, #4a4a4a 1660px, #1a1a1a 1660px);
}
```
